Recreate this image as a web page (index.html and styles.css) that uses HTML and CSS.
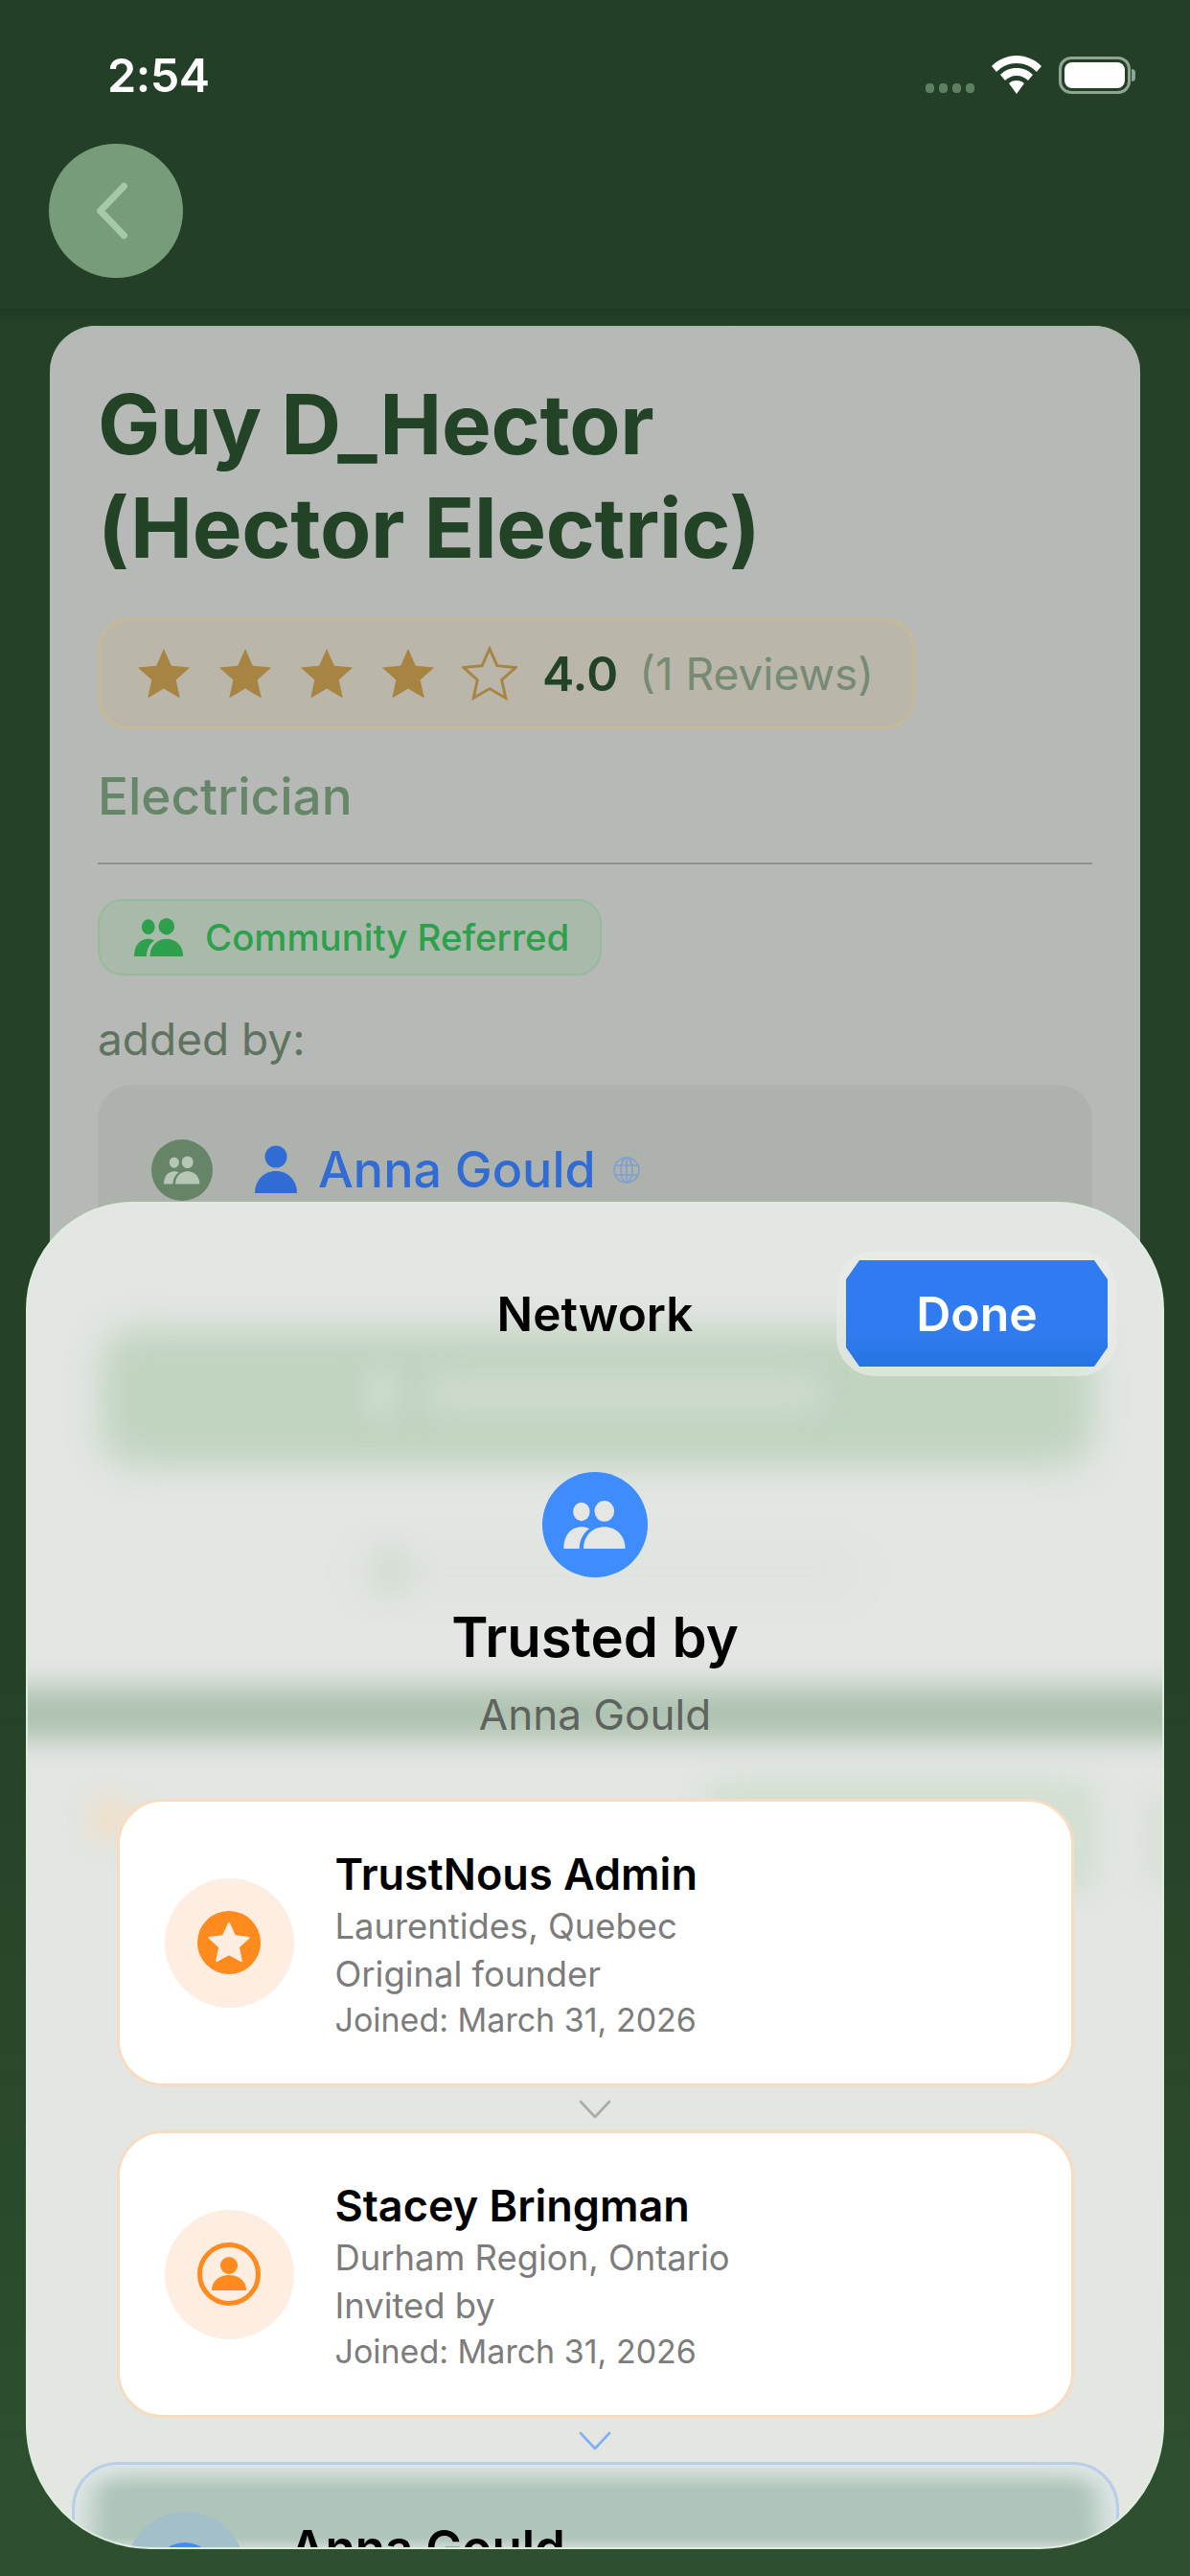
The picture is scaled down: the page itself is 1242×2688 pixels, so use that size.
FILE: index.html
```html
<!DOCTYPE html>
<html lang="en">
<head>
<meta charset="utf-8">
<title>Network</title>
<link rel="stylesheet" href="styles.css">
</head>
<body>
<svg class="defs" width="0" height="0" aria-hidden="true">
  <symbol id="people" viewBox="0 0 60 46">
    <ellipse cx="17" cy="10.5" rx="8" ry="9"/>
    <ellipse cx="39" cy="10" rx="9.5" ry="10"/>
    <path d="M0 46C0 33 7 25 17 25c3 0 5 .6 7.500 1.800C18.500 31 15 38 15 46Z"/>
    <path d="M19 46C19 33 28 25 39 25s20 8 20 21Z"/>
  </symbol>
  <symbol id="person" viewBox="0 0 46 50">
    <circle cx="23" cy="12" r="11.500"/>
    <path d="M1 50C1 37 10 27 23 27s22 10 22 23Z"/>
  </symbol>
  <symbol id="star" viewBox="0 0 60 60">
    <path d="M30 3l8.100 18.400 20 2-15 13.300 4.300 19.600L30 46.100 12.600 56.300l4.300-19.600-15-13.300 20-2Z"/>
  </symbol>
  <symbol id="chev" viewBox="0 0 34 20">
    <path d="M2 2l15 16L32 2" fill="none" stroke="currentColor" stroke-width="2.600" stroke-linecap="round" stroke-linejoin="round"/>
  </symbol>
</svg>

<div class="screen">
  <header class="topbar">
    <div class="status">
      <span class="time">2:54</span>
      <div class="status-icons">
        <div class="signal"><i></i><i></i><i></i><i></i></div>
        <svg class="wifi" viewBox="0 0 52 40"><path d="M26 0C16 0 7 4 0 11l5 6C11 11 18 8 26 8s15 3 21 9l5-6C45 4 36 0 26 0Z"/><path d="M26 13c-7 0-12.500 2.500-17 7l5 6c3-3 7-5 12-5s9 2 12 5l5-6c-4.500-4.500-10-7-17-7Z"/><path d="M26 26c-3.500 0-6 1-8 3l8 11 8-11c-2-2-4.500-3-8-3Z"/></svg>
        <div class="battery"><div class="battery-shell"><div class="battery-fill"></div></div><div class="battery-nub"></div></div>
      </div>
    </div>
    <div class="navrow">
      <button class="back" aria-label="Back">
        <svg viewBox="0 0 40 62"><path d="M33 4L7 31l26 27" fill="none" stroke="#a6c9a8" stroke-width="7.500" stroke-linecap="round" stroke-linejoin="round"/></svg>
      </button>
    </div>
  </header>

  <main class="page">
    <section class="card">
      <h1 class="title">Guy D_Hector<br>(Hector Electric)</h1>
      <div class="rating">
        <svg class="rstar"><use href="#star"/></svg>
        <svg class="rstar"><use href="#star"/></svg>
        <svg class="rstar"><use href="#star"/></svg>
        <svg class="rstar"><use href="#star"/></svg>
        <svg class="rstar empty"><use href="#star"/></svg>
        <span class="score">4.0</span>
        <span class="reviews">(1 Reviews)</span>
      </div>
      <div class="trade">Electrician</div>
      <hr class="rule">
      <div class="referred">
        <svg class="referred-icon"><use href="#people"/></svg>
        <span>Community Referred</span>
      </div>
      <div class="added">added by:</div>
      <div class="adder">
        <div class="adder-badge"><svg><use href="#people"/></svg></div>
        <svg class="adder-person"><use href="#person"/></svg>
        <span class="adder-name">Anna Gould</span>
        <svg class="globe" viewBox="0 0 30 30"><circle cx="15" cy="15" r="13"/><ellipse cx="15" cy="15" rx="6" ry="13"/><path d="M3 10h24M3 20h24M15 2v26"/></svg>
      </div>
    </section>
  </main>

  <aside class="sheet">
    <div class="ghosts" aria-hidden="true">
      <div class="ghost ghost-call"></div>
      <div class="ghost ghost-phone"></div>
      <div class="ghost ghost-call-text"></div>
      <div class="ghost ghost-share"></div>
      <div class="ghost ghost-share-icon"></div>
      <div class="ghost ghost-band"></div>
      <div class="ghost ghost-pill"></div>
      <div class="ghost ghost-orange"></div>
      <div class="ghost ghost-edge"></div>
    </div>
    <div class="handle"></div>
    <div class="sheet-head">
      <span></span>
      <h2 class="sheet-title">Network</h2>
      <div class="done-halo"><button class="done">Done</button></div>
    </div>
    <div class="hero">
      <div class="hero-badge"><svg><use href="#people"/></svg></div>
      <div class="hero-title">Trusted by</div>
      <div class="hero-sub">Anna Gould</div>
    </div>
    <div class="chain">
      <article class="node">
        <div class="node-icon">
          <svg class="ic-star" viewBox="0 0 66 66"><circle cx="33" cy="33" r="33" fill="#ff8a1e"/><path d="M33 13l6.200 13.300 14.300 1.700-10.600 9.800 2.900 14.400L33 45.100l-12.800 7.100 2.900-14.400-10.600-9.800 14.300-1.700Z" fill="#fdeee1" stroke="#fdeee1" stroke-width="2" stroke-linejoin="round"/></svg>
        </div>
        <div class="node-text">
          <div class="node-name">TrustNous Admin</div>
          <div class="node-line">Laurentides, Quebec</div>
          <div class="node-line">Original founder</div>
          <div class="node-date">Joined: March 31, 2026</div>
        </div>
      </article>
      <svg class="arrow"><use href="#chev"/></svg>
      <article class="node">
        <div class="node-icon">
          <svg class="ic-star" viewBox="0 0 66 66"><circle cx="33" cy="33" r="30.500" fill="none" stroke="#ff8a1e" stroke-width="5"/><circle cx="33" cy="24" r="9" fill="#ff8a1e"/><path d="M15 50c0-10 8-16 18-16s18 6 18 16Z" fill="#ff8a1e"/></svg>
        </div>
        <div class="node-text">
          <div class="node-name">Stacey Bringman</div>
          <div class="node-line">Durham Region, Ontario</div>
          <div class="node-line">Invited by</div>
          <div class="node-date">Joined: March 31, 2026</div>
        </div>
      </article>
      <svg class="arrow arrow-blue"><use href="#chev"/></svg>
      <article class="node node-self">
        <div class="node-icon"><div class="self-dot"></div></div>
        <div class="node-text">
          <div class="node-name">Anna Gould</div>
        </div>
      </article>
    </div>
  </aside>
</div>
</body>
</html>
```
FILE: styles.css
```css
* { box-sizing: border-box; }
html, body { margin: 0; padding: 0; }
body { font-family: Inter, "Liberation Sans", sans-serif; background: #2a4a2d; }
.defs { position: absolute; }
svg { display: block; fill: currentColor; }

.screen {
  position: relative;
  width: 1242px;
  height: 2688px;
  overflow: hidden;
  background: linear-gradient(#254228, #2e5030);
}

/* top */
.topbar { height: 322px; background: #233f27; }
.status { display: flex; justify-content: space-between; align-items: flex-start; padding: 50px 57px 0 112px; height: 150px; }
.time { color: #fff; font-size: 48.500px; font-weight: 600; line-height: 58px; letter-spacing: -.5px; }
.status-icons { display: flex; align-items: flex-start; padding-top: 8px; }
.signal { display: flex; gap: 5px; margin-top: 29px; margin-right: 18px; }
.signal i { width: 9px; height: 10px; border-radius: 4px; background: #5f7f62; }
.wifi { width: 52px; height: 40px; color: #fff; margin-right: 18px; }
.battery { display: flex; align-items: center; height: 40px; }
.battery-shell { width: 75px; height: 39px; border: 3px solid #8fa593; border-radius: 13px; padding: 3px; }
.battery-fill { width: 100%; height: 100%; background: #fff; border-radius: 8px; }
.battery-nub { width: 4px; height: 13px; background: #8fa593; border-radius: 0 4px 4px 0; margin-left: 1px; }
.navrow { padding-left: 51px; }
.back { display: flex; align-items: center; justify-content: center; width: 140px; height: 140px; padding: 0 8px 0 0; border: 0; border-radius: 50%; background: #779c79; }
.back svg { width: 38px; height: 60px; }

.page { height: 2366px; padding: 18px 52px 0; background: linear-gradient(#1f3a23, #254228 18px, #254228 60%, #2e5030); }
.card { height: 1300px; padding: 49px 50px 0; border-radius: 48px; background: #b6b9b5; box-shadow: inset 0 2px 0 #a9bdad; }
.title { margin: 0; font-size: 87px; line-height: 108px; font-weight: 700; color: #234327; letter-spacing: -.3px; }
.rating { display: inline-flex; align-items: center; height: 116px; margin-top: 40px; padding: 0 40px 0 37px; background: #bab6a9; border: 3px solid #c7b995; border-radius: 32px; color: #a78442; }
.rstar { width: 58px; height: 58px; margin-right: 27px; }
.rstar.empty { fill: none; stroke: currentColor; stroke-width: 3; margin-right: 26px; }
.score { font-size: 50px; font-weight: 600; color: #234327; margin-right: 22px; }
.reviews { font-size: 46px; color: #768a74; }
.trade { margin-top: 35px; font-size: 53px; line-height: 70px; font-weight: 500; color: #668668; }
.rule { height: 2px; border: 0; margin: 34px 0 0; background: #8e918d; }
.referred { display: inline-flex; align-items: center; gap: 22px; height: 80px; margin-top: 36px; padding: 0 32px 0 36px; background: #a9baab; border: 2px solid #95bb9b; border-radius: 26px; color: #2ea04b; font-size: 38.400px; font-weight: 500; }
.referred-icon { width: 52px; height: 40px; }
.added { margin-top: 38px; font-size: 46px; line-height: 56px; color: #5f7360; }
.adder { display: flex; align-items: flex-start; height: 200px; margin-top: 20px; padding: 57px 0 24px 56px; background: #aeb2ad; border-radius: 36px; }
.adder-badge { display: flex; align-items: center; justify-content: center; width: 64px; height: 64px; border-radius: 50%; background: #668468; color: #b6c7b6; }
.adder-badge svg { width: 38px; height: 30px; }
.adder-person { width: 46px; height: 50px; margin: 6px 0 0 43px; color: #306cd4; }
.adder-name { margin-left: 21px; font-size: 52px; line-height: 64px; font-weight: 500; color: #306cd4; }
.globe { width: 30px; height: 30px; margin: 17px 0 0 17px; fill: none; stroke: #7f9fd0; stroke-width: 1.6; }

/* sheet */
.sheet {
  position: absolute;
  left: 27px;
  top: 1254px;
  width: 1188px;
  height: 1406px;
  overflow: hidden;
  border: 2px solid #dcefdd;
  border-radius: 112px 112px 130px 130px;
  background: linear-gradient(#e3e6e3 40%, #e4e6e1);
  display: flex;
  flex-direction: column;
  align-items: center;
}
.ghosts { position: absolute; inset: 0; }
.ghost { position: absolute; filter: blur(14px); }
.ghost-call { left: 76px; top: 130px; width: 1036px; height: 144px; border-radius: 36px; background: #c1d4c0; filter: blur(18px); }
.ghost-phone { left: 352px; top: 172px; width: 34px; height: 52px; border-radius: 16px; background: #cfdccf; }
.ghost-call-text { left: 412px; top: 176px; width: 420px; height: 44px; border-radius: 20px; background: #ccdacb; }
.ghost-share { left: 340px; top: 356px; width: 530px; height: 56px; border-radius: 28px; background: #dfe4de; }
.ghost-share-icon { left: 362px; top: 358px; width: 36px; height: 52px; border-radius: 18px; background: #d2dcd1; }
.ghost-band { left: -40px; top: 504px; width: 1270px; height: 56px; background: #afc3b1; }
.ghost-pill { left: 706px; top: 600px; width: 410px; height: 120px; background: #d3dfd3; border-radius: 20px; }
.ghost-orange { left: 66px; top: 622px; width: 46px; height: 40px; background: #efdfc8; }
.ghost-edge { left: 1172px; top: 620px; width: 16px; height: 90px; background: #cfdccd; }
.handle { position: relative; width: 84px; height: 17px; margin-top: 12px; border-radius: 8px; background: #a9aaab; }
.sheet-head { position: relative; display: grid; grid-template-columns: 1fr auto 1fr; align-items: center; width: 100%; margin-top: 37px; padding-right: 47px; }
.sheet-title { margin: 0 0 0 47px; font-size: 49.500px; font-weight: 600; color: #000; }
.done-halo { justify-self: end; padding: 10px; border-radius: 40px; background: rgba(232, 235, 232, .7); }
.done { display: block; width: 273px; height: 111px; padding: 0; border: 0; background: linear-gradient(#2f7bef 70%, #2574e2); color: #fff; font: 600 50px Inter, "Liberation Sans", sans-serif; clip-path: polygon(14px 0, calc(100% - 14px) 0, 100% 20px, 100% calc(100% - 20px), calc(100% - 14px) 100%, 14px 100%, 0 calc(100% - 20px), 0 20px); }
.hero { position: relative; display: flex; flex-direction: column; align-items: center; margin-top: 100px; }
.hero-badge { display: flex; align-items: center; justify-content: center; width: 110px; height: 110px; border-radius: 50%; background: #3f8cff; color: #e4e7e3; }
.hero-badge svg { width: 78px; height: 50px; }
.hero-title { margin-top: 26px; font-size: 58px; line-height: 72px; font-weight: 600; color: #000; }
.hero-sub { margin-top: 17px; font-size: 44px; line-height: 56px; color: #5e635e; }
.chain { position: relative; display: flex; flex-direction: column; align-items: center; margin-top: 60px; width: 100%; }
.node { display: flex; align-items: center; flex: none; width: 999px; height: 300px; padding-left: 47px; background: #fff; border: 3px solid #f6dcc0; border-radius: 48px; }
.node-icon { display: flex; align-items: center; justify-content: center; flex: none; width: 135px; height: 135px; border-radius: 50%; background: #fdeee1; }
.ic-star { width: 66px; height: 66px; }
.node-text { margin-left: 43px; padding-top: 3px; }
.node-name { font-size: 45px; line-height: 58px; font-weight: 600; color: #000; }
.node-line { font-size: 36.400px; line-height: 50px; color: #7c7c7c; }
.node-date { font-size: 34px; line-height: 46px; color: #7c7c7c; }
.arrow { flex: none; width: 34px; height: 20px; margin: 14px 0 12px; color: #a9acaa; }
.arrow-blue { color: #7fb0f5; }
.node-self { width: 1093px; background: linear-gradient(#dbe4e3, #afc5b9 26px, #afc5b9 76px, #dbe5e4 92px); box-shadow: inset 32px 0 24px -14px #dde6e5, inset -32px 0 24px -14px #dde6e5; border-color: #b7cfe8; padding: 49px 0 0 53px; align-items: flex-start; }
.node-self .node-icon { width: 125px; height: 125px; background: #a2bfca; align-items: flex-start; padding-top: 32px; }
.node-self .node-text { margin-left: 47px; padding-top: 0; }
.node-self .node-name { margin-top: 10px; font-size: 51px; line-height: 56px; font-weight: 600; }
.self-dot { width: 66px; height: 66px; border-radius: 50%; background: #3f8cff; }
```
